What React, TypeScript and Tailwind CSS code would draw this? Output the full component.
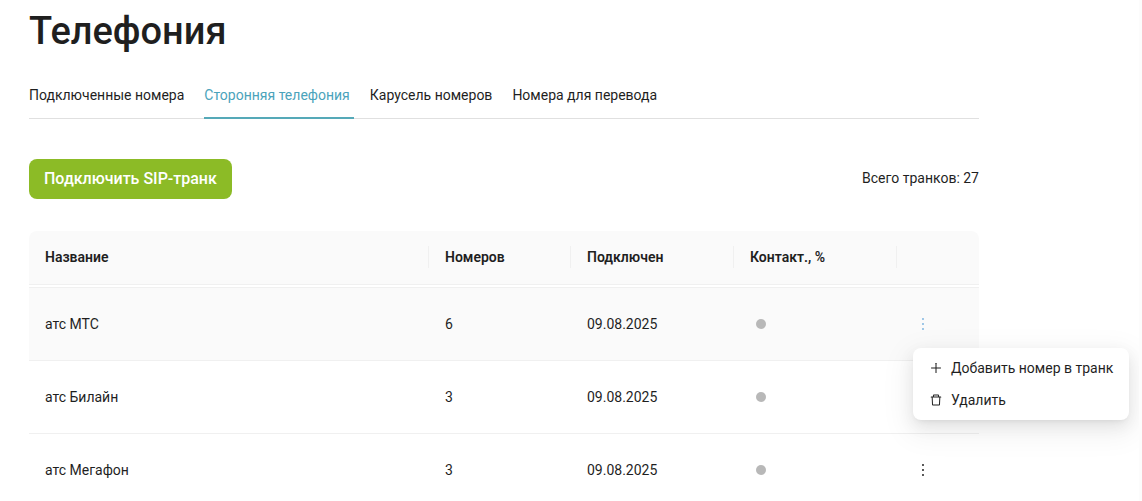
import React from "react";
import { AiOutlineDelete, AiOutlineMore, AiOutlinePlus } from "react-icons/ai";

type Trunk = { name: string; numbers: number; connected: string };

const tabs = ["Подключенные номера", "Сторонняя телефония", "Карусель номеров", "Номера для перевода"];
const activeTab = "Сторонняя телефония";

const trunks: Trunk[] = [
  { name: "атс МТС", numbers: 6, connected: "09.08.2025" },
  { name: "атс Билайн", numbers: 3, connected: "09.08.2025" },
  { name: "атс Мегафон", numbers: 3, connected: "09.08.2025" },
];

const columns = ["Название", "Номеров", "Подключен", "Контакт., %"];

function Tabs() {
  return (
    <nav className="mt-[22px] flex gap-5 border-b border-[#e0e0e0]" aria-label="Разделы телефонии">
      {tabs.map((tab) => (
        <a
          key={tab}
          href="#"
          aria-current={tab === activeTab ? "page" : undefined}
          className={
            tab === activeTab
              ? "-mr-1 -mb-px border-b-2 border-[#55a9b8] pt-2 pr-1 pb-[11px] text-[#4ba3bb]"
              : "pt-2 pb-[11px]"
          }
        >
          {tab}
        </a>
      ))}
    </nav>
  );
}

function RowMenu() {
  return (
    <div
      role="menu"
      className="absolute top-full left-0 z-10 flex w-[216px] flex-col rounded-lg bg-white p-1 text-left shadow-[0_6px_16px_0_rgba(0,0,0,0.08),0_3px_6px_-4px_rgba(0,0,0,0.12),0_9px_28px_8px_rgba(0,0,0,0.05)]"
    >
      <button role="menuitem" type="button" className="flex h-8 items-center gap-2 px-3 whitespace-nowrap">
        <AiOutlinePlus className="size-3.5 shrink-0" />
        Добавить номер в транк
      </button>
      <button role="menuitem" type="button" className="flex h-8 items-center gap-2 px-3 whitespace-nowrap">
        <AiOutlineDelete className="size-3.5 shrink-0" />
        Удалить
      </button>
    </div>
  );
}

function TrunkRow({ trunk, active }: { trunk: Trunk; active: boolean }) {
  return (
    <tr className={active ? "h-[73px] bg-[#fafafa]" : "h-[73px]"}>
      <td className="border-b border-[#f0f0f0] px-4">{trunk.name}</td>
      <td className="border-b border-[#f0f0f0] px-4">{trunk.numbers}</td>
      <td className="border-b border-[#f0f0f0] px-4">{trunk.connected}</td>
      <td className="border-b border-[#f0f0f0] px-4">
        <span className="ml-1.5 block size-2.5 rounded-full bg-[#b8b8b8]" />
      </td>
      <td className="border-b border-[#f0f0f0] px-4">
        <div className="relative flex h-12 items-center">
          <button
            type="button"
            aria-label="Действия"
            className={active ? "flex size-5 items-center justify-center text-[#7fb5e0]" : "flex size-5 items-center justify-center"}
          >
            <AiOutlineMore className="size-[18px]" />
          </button>
          {active && <RowMenu />}
        </div>
      </td>
    </tr>
  );
}

export default function App() {
  return (
    <div className="min-h-screen bg-[#fcfcfc] pr-[3px] font-[Roboto,sans-serif] text-sm leading-[22px] text-[#1f1f1f]">
      <div className="min-h-screen overflow-clip bg-white pl-[29px]">
        <main className="max-w-[950px] pt-2">
          <h1 className="text-[38px] leading-[46px] font-medium">Телефония</h1>
          <Tabs />
          <div className="mt-10 flex items-center justify-between">
            <button type="button" className="h-10 rounded-lg bg-[#8cbb26] px-[15px] text-base font-medium text-white">
              Подключить SIP-транк
            </button>
            <p className="pb-0.5">Всего транков: 27</p>
          </div>
          <table className="mt-8 w-full table-fixed border-separate border-spacing-0 text-left">
            <colgroup>
              <col />
              <col className="w-[142px]" />
              <col className="w-[163px]" />
              <col className="w-[163px]" />
              <col className="w-[82px]" />
            </colgroup>
            <thead>
              <tr className="h-[54px]">
                {columns.map((column) => (
                  <th
                    key={column}
                    scope="col"
                    className="border-b border-[#f0f0f0] bg-[#fafafa] pt-0 pb-0.5 pl-4 font-semibold first:rounded-tl-lg"
                  >
                    <div className="border-r border-[#f0f0f0]">{column}</div>
                  </th>
                ))}
                <th scope="col" aria-label="Действия" className="rounded-tr-lg border-b border-[#f0f0f0] bg-[#fafafa]" />
              </tr>
            </thead>
            <tbody>
              <tr aria-hidden="true">
                <td colSpan={5} className="h-[3px] border-b border-[#f0f0f0] p-0" />
              </tr>
              {trunks.map((trunk, index) => (
                <TrunkRow key={trunk.name} trunk={trunk} active={index === 0} />
              ))}
            </tbody>
          </table>
        </main>
      </div>
    </div>
  );
}
